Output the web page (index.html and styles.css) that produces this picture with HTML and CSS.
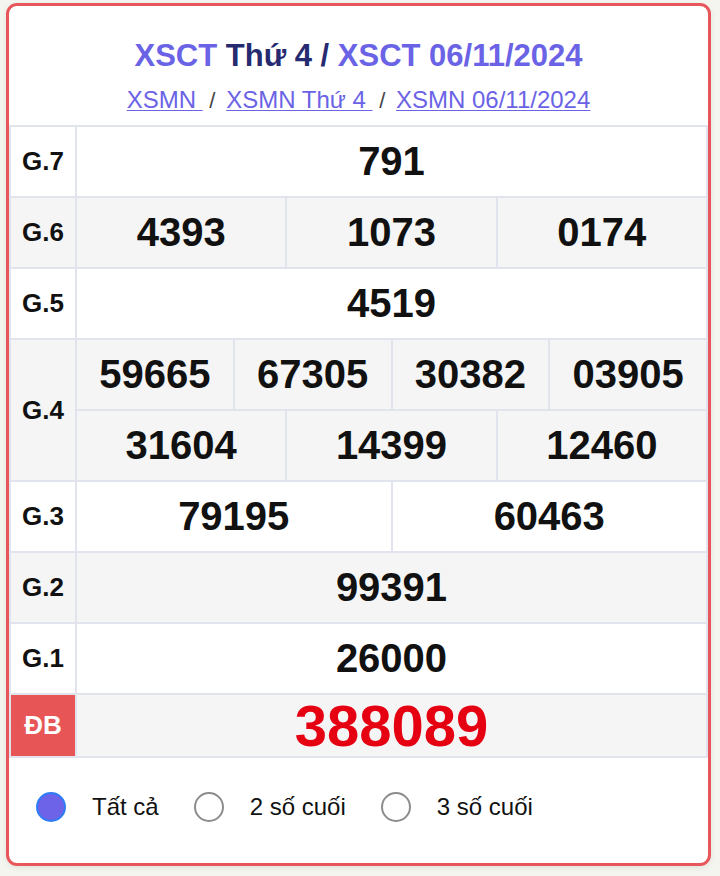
FILE: index.html
```html
<!DOCTYPE html>
<html lang="vi">
<head>
<meta charset="utf-8">
<title>XSCT Thứ 4</title>
<link rel="stylesheet" href="styles.css">
</head>
<body>
<div class="card">
  <div class="head">
    <h1 class="title"><a class="t-link">XSCT</a> <span class="t-dark">Thứ 4 /</span> <a class="t-link">XSCT 06/11/2024</a></h1>
    <div class="crumbs"><a class="c-link">XSMN </a> <span class="sep">/</span> <a class="c-link">XSMN Thứ 4 </a> <span class="sep">/</span> <a class="c-link">XSMN 06/11/2024</a></div>
  </div>
  <div class="results">
    <div class="lbl">G.7</div>
    <div class="num s12">791</div>

    <div class="lbl alt">G.6</div>
    <div class="num alt s4">4393</div>
    <div class="num alt s4">1073</div>
    <div class="num alt s4">0174</div>

    <div class="lbl">G.5</div>
    <div class="num s12">4519</div>

    <div class="lbl alt r2">G.4</div>
    <div class="num alt s3">59665</div>
    <div class="num alt s3">67305</div>
    <div class="num alt s3">30382</div>
    <div class="num alt s3">03905</div>
    <div class="num alt s4">31604</div>
    <div class="num alt s4">14399</div>
    <div class="num alt s4">12460</div>

    <div class="lbl">G.3</div>
    <div class="num s6">79195</div>
    <div class="num s6">60463</div>

    <div class="lbl alt">G.2</div>
    <div class="num alt s12">99391</div>

    <div class="lbl">G.1</div>
    <div class="num s12">26000</div>

    <div class="lbl db">ĐB</div>
    <div class="num alt s12 db-num">388089</div>
  </div>
  <div class="radios">
    <label class="opt"><span class="dot on"></span><span class="opt-text">Tất cả</span></label>
    <label class="opt"><span class="dot"></span><span class="opt-text">2 số cuối</span></label>
    <label class="opt"><span class="dot"></span><span class="opt-text">3 số cuối</span></label>
  </div>
</div>
</body>
</html>
```
FILE: styles.css
```css
* { box-sizing: border-box; }
html, body { margin: 0; padding: 0; }
body {
  background: #f5f5f0;
  font-family: "Liberation Sans", Arial, sans-serif;
  color: #111;
  width: 720px;
  height: 876px;
  overflow: hidden;
}
.card {
  margin: 3px 0 0 6px;
  width: 705px;
  background: #fff;
  border: 3px solid #e8555a;
  border-radius: 11px;
  box-shadow: 0 2px 6px rgba(0,0,0,0.08);
  padding-bottom: 41px;
  overflow: hidden;
}
.head {
  padding-top: 31px;
  text-align: center;
}
.title {
  margin: 0;
  font-size: 31px;
  line-height: 37px;
  font-weight: 700;
}
.t-link { color: #6b63e6; text-decoration: none; }
.t-dark { color: #262a70; }
.crumbs {
  margin-top: 12px;
  font-size: 24px;
  line-height: 28px;
  color: #333;
}
.c-link {
  color: #6b63e6;
  text-decoration: underline;
  text-underline-offset: 2px;
  text-decoration-thickness: 1px;
  white-space: pre;
}
.sep { color: #444; font-size: 22px; padding-right: 4px; }
.results {
  margin-top: 10px;
  display: grid;
  grid-template-columns: 64px repeat(12, 1fr);
  grid-template-rows: repeat(8, 69px) 61px;
  gap: 2px;
  padding: 2px;
  background: #e1e4ec;
}
.lbl {
  background: #fff;
  display: flex;
  align-items: center;
  justify-content: center;
  font-weight: 700;
  font-size: 26px;
  color: #111;
}
.num {
  background: #fff;
  display: flex;
  align-items: center;
  justify-content: center;
  font-weight: 700;
  font-size: 40px;
  color: #111;
}
.alt { background: #f5f5f5; }
.s12 { grid-column: span 12; }
.s6 { grid-column: span 6; }
.s4 { grid-column: span 4; }
.s3 { grid-column: span 3; }
.r2 { grid-row: span 2; }
.db {
  background: #e85556;
  color: #fff;
}
.db-num {
  color: #e50012;
  font-size: 58px;
}
.radios {
  display: flex;
  align-items: center;
  padding: 34px 0 0 27px;
  height: 64px;
}
.opt {
  display: flex;
  align-items: center;
  margin-right: 35px;
}
.dot {
  width: 30px;
  height: 30px;
  border-radius: 50%;
  border: 2.5px solid #8c8c8c;
  background: #fff;
  margin-right: 26px;
}
.dot.on {
  background: #6c63e8;
  border-color: #2f7df6;
}
.opt-text {
  font-size: 24px;
  color: #111;
}
```
